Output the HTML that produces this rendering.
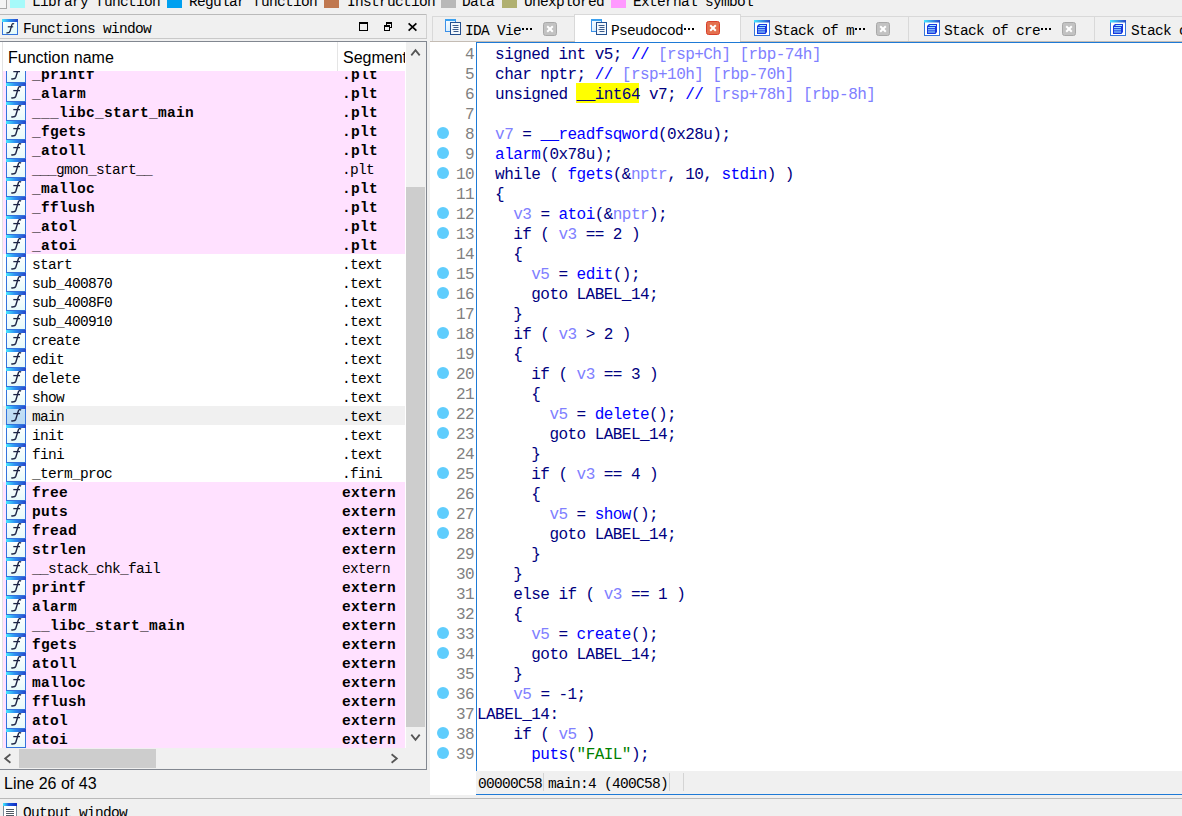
<!DOCTYPE html>
<html><head><meta charset="utf-8"><style>
*{margin:0;padding:0;box-sizing:border-box}
html,body{width:1182px;height:816px;overflow:hidden;background:#f0f0f0;position:relative;font-family:"Liberation Mono",monospace}
.a{position:absolute}
.sm{font-family:"Liberation Mono",monospace;font-size:14.5px;letter-spacing:-0.7px;white-space:pre;color:#000}
.bd{font-weight:bold;letter-spacing:0.3px}
.row{position:absolute;left:3px;width:402px;height:19px}
.row .ic{position:absolute;left:3px;top:0;width:20px;height:19px}
.row .nm{position:absolute;left:29px;top:2px;line-height:19px}
.row .sg{position:absolute;left:339px;top:2px;line-height:19px}
.code{position:absolute;left:477px;font-family:"Liberation Mono",monospace;font-size:16px;letter-spacing:-0.55px;white-space:pre;line-height:20px;height:20px;color:#000080}
.ln{position:absolute;left:440px;width:34px;text-align:right;font-family:"Liberation Mono",monospace;font-size:16px;letter-spacing:-0.55px;line-height:20px;height:20px;color:#808080}
.dot{position:absolute;left:437px;width:12px;height:12px;border-radius:50%;background:#5fcdfd}
.b{color:#0000ff}.v{color:#8080ff}.c{color:#8080ff}.g{color:#008000}.y{}
.tab{position:absolute;top:16px;height:26px;border:1px solid #d9d9d9;border-bottom:none;background:#f0f0f0}
.tt{position:absolute;top:0;line-height:26px;font-family:"Liberation Mono",monospace;font-size:13.33px;white-space:pre;color:#000}
.cx{position:absolute;width:14px;height:14px;border-radius:2px;background:#b4b4b4}
</style></head><body>

<div class="a" style="left:0;top:0;width:7px;height:9px;border:1px solid #a8a8a8;border-top:none;border-left:none;background:#f4f4f4"></div>
<div class="a" style="left:10px;top:0;width:15px;height:8px;background:#a6fafa"></div>
<div class="a sm" style="left:32px;top:-6px;line-height:16px">Library&#32;function</div>
<div class="a" style="left:167px;top:0;width:15px;height:8px;background:#00a0f0"></div>
<div class="a sm" style="left:189px;top:-6px;line-height:16px">Regular&#32;function</div>
<div class="a" style="left:324px;top:0;width:15px;height:8px;background:#c07850"></div>
<div class="a sm" style="left:347px;top:-6px;line-height:16px">Instruction</div>
<div class="a" style="left:441px;top:0;width:15px;height:8px;background:#b8b8b8"></div>
<div class="a sm" style="left:462px;top:-6px;line-height:16px">Data</div>
<div class="a" style="left:502px;top:0;width:15px;height:8px;background:#b0b070"></div>
<div class="a sm" style="left:524px;top:-6px;line-height:16px">Unexplored</div>
<div class="a" style="left:611px;top:0;width:15px;height:8px;background:#ff99ff"></div>
<div class="a sm" style="left:633px;top:-6px;line-height:16px">External&#32;symbol</div>
<div class="a" style="left:0;top:14px;width:427px;height:1px;background:#bababa"></div>
<div class="a" style="left:426px;top:14px;width:1px;height:25px;background:#d0d0d0"></div>
<div class="a" style="left:0;top:38px;width:427px;height:1px;background:#c9c9c9"></div>
<div class="a" style="left:2px;top:19px;width:16px;height:16px"><svg width="16" height="16" viewBox="0 0 16 16"><defs><linearGradient id="ttg" x1="0" x2="1"><stop offset="0" stop-color="#48e8ff"/><stop offset="0.45" stop-color="#2c8ef0"/><stop offset="1" stop-color="#2846c8"/></linearGradient><linearGradient id="ttb" x1="0" y1="0" x2="0" y2="1"><stop offset="0" stop-color="#ffffff"/><stop offset="1" stop-color="#e0fafa"/></linearGradient></defs><rect x="0.5" y="0.5" width="15" height="15" fill="url(#ttb)" stroke="#3474dc"/><rect x="0" y="0" width="16" height="3" fill="url(#ttg)"/><path d="M12 5.2C11.4 4.4 10.3 4.5 9.9 5.6L7.9 12.6C7.5 13.6 6.6 14 4.4 13.8" fill="none" stroke="#1c2444" stroke-width="1.3"/><path d="M5.8 7.8H11.2" stroke="#1c2444" stroke-width="1.2"/></svg></div>
<div class="a sm" style="left:23px;top:21px;line-height:16px">Functions window</div>
<div class="a" style="left:359px;top:22px;width:9px;height:9px;border:1px solid #000;border-top-width:2px"></div>
<div class="a" style="left:386px;top:22px;width:6px;height:6px;border:1px solid #000;border-top-width:2px"></div>
<div class="a" style="left:384px;top:25px;width:6px;height:6px;border:1px solid #000;border-top-width:2px;background:#f0f0f0"></div>
<svg class="a" style="left:407px;top:22px" width="11" height="10"><path d="M1.6 1.4L9.4 8.6M9.4 1.4L1.6 8.6" stroke="#000" stroke-width="1.7"/></svg>
<div class="a" style="left:0;top:41px;width:427px;height:729px;border:1px solid #828790;border-left:none;background:#fff"></div>
<div class="a" style="left:2px;top:42px;width:1px;height:706px;background:#e3e3e3"></div>
<div class="a" style="left:8px;top:49px;font-family:'Liberation Sans', sans-serif;font-size:16px;line-height:18px;color:#000">Function name</div>
<div class="a" style="left:337px;top:42px;width:1px;height:29px;background:#e5e5e5"></div>
<div class="a" style="left:343px;top:49px;width:62px;overflow:hidden;font-family:'Liberation Sans', sans-serif;font-size:16px;line-height:18px;color:#000;white-space:nowrap">Segment</div>
<div class="a" style="left:0;top:71px;width:406px;height:677px;overflow:hidden">
<div class="row" style="top:-7px;background:#ffe1ff"><div class="ic"><svg width="20" height="19" viewBox="0 0 20 19"><defs><linearGradient id="tg1" x1="0" x2="1"><stop offset="0" stop-color="#48e8ff"/><stop offset="0.45" stop-color="#2c8ef0"/><stop offset="1" stop-color="#2846c8"/></linearGradient><linearGradient id="tgb1" x1="0" y1="0" x2="0" y2="1"><stop offset="0" stop-color="#ffffff"/><stop offset="1" stop-color="#e6fafa"/></linearGradient></defs><rect x="0.5" y="0.5" width="19" height="18" fill="url(#tgb1)" stroke="#3474dc"/><rect x="0" y="0" width="20" height="3" fill="url(#tg1)"/><path d="M15 4.2C14.2 3.3 12.9 3.4 12.4 4.8L9.8 13.2C9.3 14.6 8 15.1 5.2 14.9" fill="none" stroke="#1c2444" stroke-width="1.4"/><path d="M7.3 7.6H14" stroke="#1c2444" stroke-width="1.3"/></svg></div><div class="nm sm bd">_printf</div><div class="sg sm bd">.plt</div></div>
<div class="row" style="top:12px;background:#ffe1ff"><div class="ic"><svg width="20" height="19" viewBox="0 0 20 19"><defs><linearGradient id="tg2" x1="0" x2="1"><stop offset="0" stop-color="#48e8ff"/><stop offset="0.45" stop-color="#2c8ef0"/><stop offset="1" stop-color="#2846c8"/></linearGradient><linearGradient id="tgb2" x1="0" y1="0" x2="0" y2="1"><stop offset="0" stop-color="#ffffff"/><stop offset="1" stop-color="#e6fafa"/></linearGradient></defs><rect x="0.5" y="0.5" width="19" height="18" fill="url(#tgb2)" stroke="#3474dc"/><rect x="0" y="0" width="20" height="3" fill="url(#tg2)"/><path d="M15 4.2C14.2 3.3 12.9 3.4 12.4 4.8L9.8 13.2C9.3 14.6 8 15.1 5.2 14.9" fill="none" stroke="#1c2444" stroke-width="1.4"/><path d="M7.3 7.6H14" stroke="#1c2444" stroke-width="1.3"/></svg></div><div class="nm sm bd">_alarm</div><div class="sg sm bd">.plt</div></div>
<div class="row" style="top:31px;background:#ffe1ff"><div class="ic"><svg width="20" height="19" viewBox="0 0 20 19"><defs><linearGradient id="tg3" x1="0" x2="1"><stop offset="0" stop-color="#48e8ff"/><stop offset="0.45" stop-color="#2c8ef0"/><stop offset="1" stop-color="#2846c8"/></linearGradient><linearGradient id="tgb3" x1="0" y1="0" x2="0" y2="1"><stop offset="0" stop-color="#ffffff"/><stop offset="1" stop-color="#e6fafa"/></linearGradient></defs><rect x="0.5" y="0.5" width="19" height="18" fill="url(#tgb3)" stroke="#3474dc"/><rect x="0" y="0" width="20" height="3" fill="url(#tg3)"/><path d="M15 4.2C14.2 3.3 12.9 3.4 12.4 4.8L9.8 13.2C9.3 14.6 8 15.1 5.2 14.9" fill="none" stroke="#1c2444" stroke-width="1.4"/><path d="M7.3 7.6H14" stroke="#1c2444" stroke-width="1.3"/></svg></div><div class="nm sm bd">___libc_start_main</div><div class="sg sm bd">.plt</div></div>
<div class="row" style="top:50px;background:#ffe1ff"><div class="ic"><svg width="20" height="19" viewBox="0 0 20 19"><defs><linearGradient id="tg4" x1="0" x2="1"><stop offset="0" stop-color="#48e8ff"/><stop offset="0.45" stop-color="#2c8ef0"/><stop offset="1" stop-color="#2846c8"/></linearGradient><linearGradient id="tgb4" x1="0" y1="0" x2="0" y2="1"><stop offset="0" stop-color="#ffffff"/><stop offset="1" stop-color="#e6fafa"/></linearGradient></defs><rect x="0.5" y="0.5" width="19" height="18" fill="url(#tgb4)" stroke="#3474dc"/><rect x="0" y="0" width="20" height="3" fill="url(#tg4)"/><path d="M15 4.2C14.2 3.3 12.9 3.4 12.4 4.8L9.8 13.2C9.3 14.6 8 15.1 5.2 14.9" fill="none" stroke="#1c2444" stroke-width="1.4"/><path d="M7.3 7.6H14" stroke="#1c2444" stroke-width="1.3"/></svg></div><div class="nm sm bd">_fgets</div><div class="sg sm bd">.plt</div></div>
<div class="row" style="top:69px;background:#ffe1ff"><div class="ic"><svg width="20" height="19" viewBox="0 0 20 19"><defs><linearGradient id="tg5" x1="0" x2="1"><stop offset="0" stop-color="#48e8ff"/><stop offset="0.45" stop-color="#2c8ef0"/><stop offset="1" stop-color="#2846c8"/></linearGradient><linearGradient id="tgb5" x1="0" y1="0" x2="0" y2="1"><stop offset="0" stop-color="#ffffff"/><stop offset="1" stop-color="#e6fafa"/></linearGradient></defs><rect x="0.5" y="0.5" width="19" height="18" fill="url(#tgb5)" stroke="#3474dc"/><rect x="0" y="0" width="20" height="3" fill="url(#tg5)"/><path d="M15 4.2C14.2 3.3 12.9 3.4 12.4 4.8L9.8 13.2C9.3 14.6 8 15.1 5.2 14.9" fill="none" stroke="#1c2444" stroke-width="1.4"/><path d="M7.3 7.6H14" stroke="#1c2444" stroke-width="1.3"/></svg></div><div class="nm sm bd">_atoll</div><div class="sg sm bd">.plt</div></div>
<div class="row" style="top:88px;background:#ffe1ff"><div class="ic"><svg width="20" height="19" viewBox="0 0 20 19"><defs><linearGradient id="tg6" x1="0" x2="1"><stop offset="0" stop-color="#48e8ff"/><stop offset="0.45" stop-color="#2c8ef0"/><stop offset="1" stop-color="#2846c8"/></linearGradient><linearGradient id="tgb6" x1="0" y1="0" x2="0" y2="1"><stop offset="0" stop-color="#ffffff"/><stop offset="1" stop-color="#e6fafa"/></linearGradient></defs><rect x="0.5" y="0.5" width="19" height="18" fill="url(#tgb6)" stroke="#3474dc"/><rect x="0" y="0" width="20" height="3" fill="url(#tg6)"/><path d="M15 4.2C14.2 3.3 12.9 3.4 12.4 4.8L9.8 13.2C9.3 14.6 8 15.1 5.2 14.9" fill="none" stroke="#1c2444" stroke-width="1.4"/><path d="M7.3 7.6H14" stroke="#1c2444" stroke-width="1.3"/></svg></div><div class="nm sm">___gmon_start__</div><div class="sg sm">.plt</div></div>
<div class="row" style="top:107px;background:#ffe1ff"><div class="ic"><svg width="20" height="19" viewBox="0 0 20 19"><defs><linearGradient id="tg7" x1="0" x2="1"><stop offset="0" stop-color="#48e8ff"/><stop offset="0.45" stop-color="#2c8ef0"/><stop offset="1" stop-color="#2846c8"/></linearGradient><linearGradient id="tgb7" x1="0" y1="0" x2="0" y2="1"><stop offset="0" stop-color="#ffffff"/><stop offset="1" stop-color="#e6fafa"/></linearGradient></defs><rect x="0.5" y="0.5" width="19" height="18" fill="url(#tgb7)" stroke="#3474dc"/><rect x="0" y="0" width="20" height="3" fill="url(#tg7)"/><path d="M15 4.2C14.2 3.3 12.9 3.4 12.4 4.8L9.8 13.2C9.3 14.6 8 15.1 5.2 14.9" fill="none" stroke="#1c2444" stroke-width="1.4"/><path d="M7.3 7.6H14" stroke="#1c2444" stroke-width="1.3"/></svg></div><div class="nm sm bd">_malloc</div><div class="sg sm bd">.plt</div></div>
<div class="row" style="top:126px;background:#ffe1ff"><div class="ic"><svg width="20" height="19" viewBox="0 0 20 19"><defs><linearGradient id="tg8" x1="0" x2="1"><stop offset="0" stop-color="#48e8ff"/><stop offset="0.45" stop-color="#2c8ef0"/><stop offset="1" stop-color="#2846c8"/></linearGradient><linearGradient id="tgb8" x1="0" y1="0" x2="0" y2="1"><stop offset="0" stop-color="#ffffff"/><stop offset="1" stop-color="#e6fafa"/></linearGradient></defs><rect x="0.5" y="0.5" width="19" height="18" fill="url(#tgb8)" stroke="#3474dc"/><rect x="0" y="0" width="20" height="3" fill="url(#tg8)"/><path d="M15 4.2C14.2 3.3 12.9 3.4 12.4 4.8L9.8 13.2C9.3 14.6 8 15.1 5.2 14.9" fill="none" stroke="#1c2444" stroke-width="1.4"/><path d="M7.3 7.6H14" stroke="#1c2444" stroke-width="1.3"/></svg></div><div class="nm sm bd">_fflush</div><div class="sg sm bd">.plt</div></div>
<div class="row" style="top:145px;background:#ffe1ff"><div class="ic"><svg width="20" height="19" viewBox="0 0 20 19"><defs><linearGradient id="tg9" x1="0" x2="1"><stop offset="0" stop-color="#48e8ff"/><stop offset="0.45" stop-color="#2c8ef0"/><stop offset="1" stop-color="#2846c8"/></linearGradient><linearGradient id="tgb9" x1="0" y1="0" x2="0" y2="1"><stop offset="0" stop-color="#ffffff"/><stop offset="1" stop-color="#e6fafa"/></linearGradient></defs><rect x="0.5" y="0.5" width="19" height="18" fill="url(#tgb9)" stroke="#3474dc"/><rect x="0" y="0" width="20" height="3" fill="url(#tg9)"/><path d="M15 4.2C14.2 3.3 12.9 3.4 12.4 4.8L9.8 13.2C9.3 14.6 8 15.1 5.2 14.9" fill="none" stroke="#1c2444" stroke-width="1.4"/><path d="M7.3 7.6H14" stroke="#1c2444" stroke-width="1.3"/></svg></div><div class="nm sm bd">_atol</div><div class="sg sm bd">.plt</div></div>
<div class="row" style="top:164px;background:#ffe1ff"><div class="ic"><svg width="20" height="19" viewBox="0 0 20 19"><defs><linearGradient id="tg10" x1="0" x2="1"><stop offset="0" stop-color="#48e8ff"/><stop offset="0.45" stop-color="#2c8ef0"/><stop offset="1" stop-color="#2846c8"/></linearGradient><linearGradient id="tgb10" x1="0" y1="0" x2="0" y2="1"><stop offset="0" stop-color="#ffffff"/><stop offset="1" stop-color="#e6fafa"/></linearGradient></defs><rect x="0.5" y="0.5" width="19" height="18" fill="url(#tgb10)" stroke="#3474dc"/><rect x="0" y="0" width="20" height="3" fill="url(#tg10)"/><path d="M15 4.2C14.2 3.3 12.9 3.4 12.4 4.8L9.8 13.2C9.3 14.6 8 15.1 5.2 14.9" fill="none" stroke="#1c2444" stroke-width="1.4"/><path d="M7.3 7.6H14" stroke="#1c2444" stroke-width="1.3"/></svg></div><div class="nm sm bd">_atoi</div><div class="sg sm bd">.plt</div></div>
<div class="row" style="top:183px;background:#ffffff"><div class="ic"><svg width="20" height="19" viewBox="0 0 20 19"><defs><linearGradient id="tg11" x1="0" x2="1"><stop offset="0" stop-color="#48e8ff"/><stop offset="0.45" stop-color="#2c8ef0"/><stop offset="1" stop-color="#2846c8"/></linearGradient><linearGradient id="tgb11" x1="0" y1="0" x2="0" y2="1"><stop offset="0" stop-color="#ffffff"/><stop offset="1" stop-color="#e6fafa"/></linearGradient></defs><rect x="0.5" y="0.5" width="19" height="18" fill="url(#tgb11)" stroke="#3474dc"/><rect x="0" y="0" width="20" height="3" fill="url(#tg11)"/><path d="M15 4.2C14.2 3.3 12.9 3.4 12.4 4.8L9.8 13.2C9.3 14.6 8 15.1 5.2 14.9" fill="none" stroke="#1c2444" stroke-width="1.4"/><path d="M7.3 7.6H14" stroke="#1c2444" stroke-width="1.3"/></svg></div><div class="nm sm">start</div><div class="sg sm">.text</div></div>
<div class="row" style="top:202px;background:#ffffff"><div class="ic"><svg width="20" height="19" viewBox="0 0 20 19"><defs><linearGradient id="tg12" x1="0" x2="1"><stop offset="0" stop-color="#48e8ff"/><stop offset="0.45" stop-color="#2c8ef0"/><stop offset="1" stop-color="#2846c8"/></linearGradient><linearGradient id="tgb12" x1="0" y1="0" x2="0" y2="1"><stop offset="0" stop-color="#ffffff"/><stop offset="1" stop-color="#e6fafa"/></linearGradient></defs><rect x="0.5" y="0.5" width="19" height="18" fill="url(#tgb12)" stroke="#3474dc"/><rect x="0" y="0" width="20" height="3" fill="url(#tg12)"/><path d="M15 4.2C14.2 3.3 12.9 3.4 12.4 4.8L9.8 13.2C9.3 14.6 8 15.1 5.2 14.9" fill="none" stroke="#1c2444" stroke-width="1.4"/><path d="M7.3 7.6H14" stroke="#1c2444" stroke-width="1.3"/></svg></div><div class="nm sm">sub_400870</div><div class="sg sm">.text</div></div>
<div class="row" style="top:221px;background:#ffffff"><div class="ic"><svg width="20" height="19" viewBox="0 0 20 19"><defs><linearGradient id="tg13" x1="0" x2="1"><stop offset="0" stop-color="#48e8ff"/><stop offset="0.45" stop-color="#2c8ef0"/><stop offset="1" stop-color="#2846c8"/></linearGradient><linearGradient id="tgb13" x1="0" y1="0" x2="0" y2="1"><stop offset="0" stop-color="#ffffff"/><stop offset="1" stop-color="#e6fafa"/></linearGradient></defs><rect x="0.5" y="0.5" width="19" height="18" fill="url(#tgb13)" stroke="#3474dc"/><rect x="0" y="0" width="20" height="3" fill="url(#tg13)"/><path d="M15 4.2C14.2 3.3 12.9 3.4 12.4 4.8L9.8 13.2C9.3 14.6 8 15.1 5.2 14.9" fill="none" stroke="#1c2444" stroke-width="1.4"/><path d="M7.3 7.6H14" stroke="#1c2444" stroke-width="1.3"/></svg></div><div class="nm sm">sub_4008F0</div><div class="sg sm">.text</div></div>
<div class="row" style="top:240px;background:#ffffff"><div class="ic"><svg width="20" height="19" viewBox="0 0 20 19"><defs><linearGradient id="tg14" x1="0" x2="1"><stop offset="0" stop-color="#48e8ff"/><stop offset="0.45" stop-color="#2c8ef0"/><stop offset="1" stop-color="#2846c8"/></linearGradient><linearGradient id="tgb14" x1="0" y1="0" x2="0" y2="1"><stop offset="0" stop-color="#ffffff"/><stop offset="1" stop-color="#e6fafa"/></linearGradient></defs><rect x="0.5" y="0.5" width="19" height="18" fill="url(#tgb14)" stroke="#3474dc"/><rect x="0" y="0" width="20" height="3" fill="url(#tg14)"/><path d="M15 4.2C14.2 3.3 12.9 3.4 12.4 4.8L9.8 13.2C9.3 14.6 8 15.1 5.2 14.9" fill="none" stroke="#1c2444" stroke-width="1.4"/><path d="M7.3 7.6H14" stroke="#1c2444" stroke-width="1.3"/></svg></div><div class="nm sm">sub_400910</div><div class="sg sm">.text</div></div>
<div class="row" style="top:259px;background:#ffffff"><div class="ic"><svg width="20" height="19" viewBox="0 0 20 19"><defs><linearGradient id="tg15" x1="0" x2="1"><stop offset="0" stop-color="#48e8ff"/><stop offset="0.45" stop-color="#2c8ef0"/><stop offset="1" stop-color="#2846c8"/></linearGradient><linearGradient id="tgb15" x1="0" y1="0" x2="0" y2="1"><stop offset="0" stop-color="#ffffff"/><stop offset="1" stop-color="#e6fafa"/></linearGradient></defs><rect x="0.5" y="0.5" width="19" height="18" fill="url(#tgb15)" stroke="#3474dc"/><rect x="0" y="0" width="20" height="3" fill="url(#tg15)"/><path d="M15 4.2C14.2 3.3 12.9 3.4 12.4 4.8L9.8 13.2C9.3 14.6 8 15.1 5.2 14.9" fill="none" stroke="#1c2444" stroke-width="1.4"/><path d="M7.3 7.6H14" stroke="#1c2444" stroke-width="1.3"/></svg></div><div class="nm sm">create</div><div class="sg sm">.text</div></div>
<div class="row" style="top:278px;background:#ffffff"><div class="ic"><svg width="20" height="19" viewBox="0 0 20 19"><defs><linearGradient id="tg16" x1="0" x2="1"><stop offset="0" stop-color="#48e8ff"/><stop offset="0.45" stop-color="#2c8ef0"/><stop offset="1" stop-color="#2846c8"/></linearGradient><linearGradient id="tgb16" x1="0" y1="0" x2="0" y2="1"><stop offset="0" stop-color="#ffffff"/><stop offset="1" stop-color="#e6fafa"/></linearGradient></defs><rect x="0.5" y="0.5" width="19" height="18" fill="url(#tgb16)" stroke="#3474dc"/><rect x="0" y="0" width="20" height="3" fill="url(#tg16)"/><path d="M15 4.2C14.2 3.3 12.9 3.4 12.4 4.8L9.8 13.2C9.3 14.6 8 15.1 5.2 14.9" fill="none" stroke="#1c2444" stroke-width="1.4"/><path d="M7.3 7.6H14" stroke="#1c2444" stroke-width="1.3"/></svg></div><div class="nm sm">edit</div><div class="sg sm">.text</div></div>
<div class="row" style="top:297px;background:#ffffff"><div class="ic"><svg width="20" height="19" viewBox="0 0 20 19"><defs><linearGradient id="tg17" x1="0" x2="1"><stop offset="0" stop-color="#48e8ff"/><stop offset="0.45" stop-color="#2c8ef0"/><stop offset="1" stop-color="#2846c8"/></linearGradient><linearGradient id="tgb17" x1="0" y1="0" x2="0" y2="1"><stop offset="0" stop-color="#ffffff"/><stop offset="1" stop-color="#e6fafa"/></linearGradient></defs><rect x="0.5" y="0.5" width="19" height="18" fill="url(#tgb17)" stroke="#3474dc"/><rect x="0" y="0" width="20" height="3" fill="url(#tg17)"/><path d="M15 4.2C14.2 3.3 12.9 3.4 12.4 4.8L9.8 13.2C9.3 14.6 8 15.1 5.2 14.9" fill="none" stroke="#1c2444" stroke-width="1.4"/><path d="M7.3 7.6H14" stroke="#1c2444" stroke-width="1.3"/></svg></div><div class="nm sm">delete</div><div class="sg sm">.text</div></div>
<div class="row" style="top:316px;background:#ffffff"><div class="ic"><svg width="20" height="19" viewBox="0 0 20 19"><defs><linearGradient id="tg18" x1="0" x2="1"><stop offset="0" stop-color="#48e8ff"/><stop offset="0.45" stop-color="#2c8ef0"/><stop offset="1" stop-color="#2846c8"/></linearGradient><linearGradient id="tgb18" x1="0" y1="0" x2="0" y2="1"><stop offset="0" stop-color="#ffffff"/><stop offset="1" stop-color="#e6fafa"/></linearGradient></defs><rect x="0.5" y="0.5" width="19" height="18" fill="url(#tgb18)" stroke="#3474dc"/><rect x="0" y="0" width="20" height="3" fill="url(#tg18)"/><path d="M15 4.2C14.2 3.3 12.9 3.4 12.4 4.8L9.8 13.2C9.3 14.6 8 15.1 5.2 14.9" fill="none" stroke="#1c2444" stroke-width="1.4"/><path d="M7.3 7.6H14" stroke="#1c2444" stroke-width="1.3"/></svg></div><div class="nm sm">show</div><div class="sg sm">.text</div></div>
<div class="row" style="top:335px;background:#f0f0f0"><div class="ic"><svg width="20" height="19" viewBox="0 0 20 19"><defs><linearGradient id="tg19" x1="0" x2="1"><stop offset="0" stop-color="#48e8ff"/><stop offset="0.45" stop-color="#2c8ef0"/><stop offset="1" stop-color="#2846c8"/></linearGradient><linearGradient id="tgb19" x1="0" y1="0" x2="0" y2="1"><stop offset="0" stop-color="#c4e0f6"/><stop offset="1" stop-color="#b9daf3"/></linearGradient></defs><rect x="0.5" y="0.5" width="19" height="18" fill="url(#tgb19)" stroke="#3474dc"/><rect x="0" y="0" width="20" height="3" fill="url(#tg19)"/><path d="M15 4.2C14.2 3.3 12.9 3.4 12.4 4.8L9.8 13.2C9.3 14.6 8 15.1 5.2 14.9" fill="none" stroke="#1c2444" stroke-width="1.4"/><path d="M7.3 7.6H14" stroke="#1c2444" stroke-width="1.3"/></svg></div><div class="nm sm">main</div><div class="sg sm">.text</div></div>
<div class="row" style="top:354px;background:#ffffff"><div class="ic"><svg width="20" height="19" viewBox="0 0 20 19"><defs><linearGradient id="tg20" x1="0" x2="1"><stop offset="0" stop-color="#48e8ff"/><stop offset="0.45" stop-color="#2c8ef0"/><stop offset="1" stop-color="#2846c8"/></linearGradient><linearGradient id="tgb20" x1="0" y1="0" x2="0" y2="1"><stop offset="0" stop-color="#ffffff"/><stop offset="1" stop-color="#e6fafa"/></linearGradient></defs><rect x="0.5" y="0.5" width="19" height="18" fill="url(#tgb20)" stroke="#3474dc"/><rect x="0" y="0" width="20" height="3" fill="url(#tg20)"/><path d="M15 4.2C14.2 3.3 12.9 3.4 12.4 4.8L9.8 13.2C9.3 14.6 8 15.1 5.2 14.9" fill="none" stroke="#1c2444" stroke-width="1.4"/><path d="M7.3 7.6H14" stroke="#1c2444" stroke-width="1.3"/></svg></div><div class="nm sm">init</div><div class="sg sm">.text</div></div>
<div class="row" style="top:373px;background:#ffffff"><div class="ic"><svg width="20" height="19" viewBox="0 0 20 19"><defs><linearGradient id="tg21" x1="0" x2="1"><stop offset="0" stop-color="#48e8ff"/><stop offset="0.45" stop-color="#2c8ef0"/><stop offset="1" stop-color="#2846c8"/></linearGradient><linearGradient id="tgb21" x1="0" y1="0" x2="0" y2="1"><stop offset="0" stop-color="#ffffff"/><stop offset="1" stop-color="#e6fafa"/></linearGradient></defs><rect x="0.5" y="0.5" width="19" height="18" fill="url(#tgb21)" stroke="#3474dc"/><rect x="0" y="0" width="20" height="3" fill="url(#tg21)"/><path d="M15 4.2C14.2 3.3 12.9 3.4 12.4 4.8L9.8 13.2C9.3 14.6 8 15.1 5.2 14.9" fill="none" stroke="#1c2444" stroke-width="1.4"/><path d="M7.3 7.6H14" stroke="#1c2444" stroke-width="1.3"/></svg></div><div class="nm sm">fini</div><div class="sg sm">.text</div></div>
<div class="row" style="top:392px;background:#ffffff"><div class="ic"><svg width="20" height="19" viewBox="0 0 20 19"><defs><linearGradient id="tg22" x1="0" x2="1"><stop offset="0" stop-color="#48e8ff"/><stop offset="0.45" stop-color="#2c8ef0"/><stop offset="1" stop-color="#2846c8"/></linearGradient><linearGradient id="tgb22" x1="0" y1="0" x2="0" y2="1"><stop offset="0" stop-color="#ffffff"/><stop offset="1" stop-color="#e6fafa"/></linearGradient></defs><rect x="0.5" y="0.5" width="19" height="18" fill="url(#tgb22)" stroke="#3474dc"/><rect x="0" y="0" width="20" height="3" fill="url(#tg22)"/><path d="M15 4.2C14.2 3.3 12.9 3.4 12.4 4.8L9.8 13.2C9.3 14.6 8 15.1 5.2 14.9" fill="none" stroke="#1c2444" stroke-width="1.4"/><path d="M7.3 7.6H14" stroke="#1c2444" stroke-width="1.3"/></svg></div><div class="nm sm">_term_proc</div><div class="sg sm">.fini</div></div>
<div class="row" style="top:411px;background:#ffe1ff"><div class="ic"><svg width="20" height="19" viewBox="0 0 20 19"><defs><linearGradient id="tg23" x1="0" x2="1"><stop offset="0" stop-color="#48e8ff"/><stop offset="0.45" stop-color="#2c8ef0"/><stop offset="1" stop-color="#2846c8"/></linearGradient><linearGradient id="tgb23" x1="0" y1="0" x2="0" y2="1"><stop offset="0" stop-color="#ffffff"/><stop offset="1" stop-color="#e6fafa"/></linearGradient></defs><rect x="0.5" y="0.5" width="19" height="18" fill="url(#tgb23)" stroke="#3474dc"/><rect x="0" y="0" width="20" height="3" fill="url(#tg23)"/><path d="M15 4.2C14.2 3.3 12.9 3.4 12.4 4.8L9.8 13.2C9.3 14.6 8 15.1 5.2 14.9" fill="none" stroke="#1c2444" stroke-width="1.4"/><path d="M7.3 7.6H14" stroke="#1c2444" stroke-width="1.3"/></svg></div><div class="nm sm bd">free</div><div class="sg sm bd">extern</div></div>
<div class="row" style="top:430px;background:#ffe1ff"><div class="ic"><svg width="20" height="19" viewBox="0 0 20 19"><defs><linearGradient id="tg24" x1="0" x2="1"><stop offset="0" stop-color="#48e8ff"/><stop offset="0.45" stop-color="#2c8ef0"/><stop offset="1" stop-color="#2846c8"/></linearGradient><linearGradient id="tgb24" x1="0" y1="0" x2="0" y2="1"><stop offset="0" stop-color="#ffffff"/><stop offset="1" stop-color="#e6fafa"/></linearGradient></defs><rect x="0.5" y="0.5" width="19" height="18" fill="url(#tgb24)" stroke="#3474dc"/><rect x="0" y="0" width="20" height="3" fill="url(#tg24)"/><path d="M15 4.2C14.2 3.3 12.9 3.4 12.4 4.8L9.8 13.2C9.3 14.6 8 15.1 5.2 14.9" fill="none" stroke="#1c2444" stroke-width="1.4"/><path d="M7.3 7.6H14" stroke="#1c2444" stroke-width="1.3"/></svg></div><div class="nm sm bd">puts</div><div class="sg sm bd">extern</div></div>
<div class="row" style="top:449px;background:#ffe1ff"><div class="ic"><svg width="20" height="19" viewBox="0 0 20 19"><defs><linearGradient id="tg25" x1="0" x2="1"><stop offset="0" stop-color="#48e8ff"/><stop offset="0.45" stop-color="#2c8ef0"/><stop offset="1" stop-color="#2846c8"/></linearGradient><linearGradient id="tgb25" x1="0" y1="0" x2="0" y2="1"><stop offset="0" stop-color="#ffffff"/><stop offset="1" stop-color="#e6fafa"/></linearGradient></defs><rect x="0.5" y="0.5" width="19" height="18" fill="url(#tgb25)" stroke="#3474dc"/><rect x="0" y="0" width="20" height="3" fill="url(#tg25)"/><path d="M15 4.2C14.2 3.3 12.9 3.4 12.4 4.8L9.8 13.2C9.3 14.6 8 15.1 5.2 14.9" fill="none" stroke="#1c2444" stroke-width="1.4"/><path d="M7.3 7.6H14" stroke="#1c2444" stroke-width="1.3"/></svg></div><div class="nm sm bd">fread</div><div class="sg sm bd">extern</div></div>
<div class="row" style="top:468px;background:#ffe1ff"><div class="ic"><svg width="20" height="19" viewBox="0 0 20 19"><defs><linearGradient id="tg26" x1="0" x2="1"><stop offset="0" stop-color="#48e8ff"/><stop offset="0.45" stop-color="#2c8ef0"/><stop offset="1" stop-color="#2846c8"/></linearGradient><linearGradient id="tgb26" x1="0" y1="0" x2="0" y2="1"><stop offset="0" stop-color="#ffffff"/><stop offset="1" stop-color="#e6fafa"/></linearGradient></defs><rect x="0.5" y="0.5" width="19" height="18" fill="url(#tgb26)" stroke="#3474dc"/><rect x="0" y="0" width="20" height="3" fill="url(#tg26)"/><path d="M15 4.2C14.2 3.3 12.9 3.4 12.4 4.8L9.8 13.2C9.3 14.6 8 15.1 5.2 14.9" fill="none" stroke="#1c2444" stroke-width="1.4"/><path d="M7.3 7.6H14" stroke="#1c2444" stroke-width="1.3"/></svg></div><div class="nm sm bd">strlen</div><div class="sg sm bd">extern</div></div>
<div class="row" style="top:487px;background:#ffe1ff"><div class="ic"><svg width="20" height="19" viewBox="0 0 20 19"><defs><linearGradient id="tg27" x1="0" x2="1"><stop offset="0" stop-color="#48e8ff"/><stop offset="0.45" stop-color="#2c8ef0"/><stop offset="1" stop-color="#2846c8"/></linearGradient><linearGradient id="tgb27" x1="0" y1="0" x2="0" y2="1"><stop offset="0" stop-color="#ffffff"/><stop offset="1" stop-color="#e6fafa"/></linearGradient></defs><rect x="0.5" y="0.5" width="19" height="18" fill="url(#tgb27)" stroke="#3474dc"/><rect x="0" y="0" width="20" height="3" fill="url(#tg27)"/><path d="M15 4.2C14.2 3.3 12.9 3.4 12.4 4.8L9.8 13.2C9.3 14.6 8 15.1 5.2 14.9" fill="none" stroke="#1c2444" stroke-width="1.4"/><path d="M7.3 7.6H14" stroke="#1c2444" stroke-width="1.3"/></svg></div><div class="nm sm">__stack_chk_fail</div><div class="sg sm">extern</div></div>
<div class="row" style="top:506px;background:#ffe1ff"><div class="ic"><svg width="20" height="19" viewBox="0 0 20 19"><defs><linearGradient id="tg28" x1="0" x2="1"><stop offset="0" stop-color="#48e8ff"/><stop offset="0.45" stop-color="#2c8ef0"/><stop offset="1" stop-color="#2846c8"/></linearGradient><linearGradient id="tgb28" x1="0" y1="0" x2="0" y2="1"><stop offset="0" stop-color="#ffffff"/><stop offset="1" stop-color="#e6fafa"/></linearGradient></defs><rect x="0.5" y="0.5" width="19" height="18" fill="url(#tgb28)" stroke="#3474dc"/><rect x="0" y="0" width="20" height="3" fill="url(#tg28)"/><path d="M15 4.2C14.2 3.3 12.9 3.4 12.4 4.8L9.8 13.2C9.3 14.6 8 15.1 5.2 14.9" fill="none" stroke="#1c2444" stroke-width="1.4"/><path d="M7.3 7.6H14" stroke="#1c2444" stroke-width="1.3"/></svg></div><div class="nm sm bd">printf</div><div class="sg sm bd">extern</div></div>
<div class="row" style="top:525px;background:#ffe1ff"><div class="ic"><svg width="20" height="19" viewBox="0 0 20 19"><defs><linearGradient id="tg29" x1="0" x2="1"><stop offset="0" stop-color="#48e8ff"/><stop offset="0.45" stop-color="#2c8ef0"/><stop offset="1" stop-color="#2846c8"/></linearGradient><linearGradient id="tgb29" x1="0" y1="0" x2="0" y2="1"><stop offset="0" stop-color="#ffffff"/><stop offset="1" stop-color="#e6fafa"/></linearGradient></defs><rect x="0.5" y="0.5" width="19" height="18" fill="url(#tgb29)" stroke="#3474dc"/><rect x="0" y="0" width="20" height="3" fill="url(#tg29)"/><path d="M15 4.2C14.2 3.3 12.9 3.4 12.4 4.8L9.8 13.2C9.3 14.6 8 15.1 5.2 14.9" fill="none" stroke="#1c2444" stroke-width="1.4"/><path d="M7.3 7.6H14" stroke="#1c2444" stroke-width="1.3"/></svg></div><div class="nm sm bd">alarm</div><div class="sg sm bd">extern</div></div>
<div class="row" style="top:544px;background:#ffe1ff"><div class="ic"><svg width="20" height="19" viewBox="0 0 20 19"><defs><linearGradient id="tg30" x1="0" x2="1"><stop offset="0" stop-color="#48e8ff"/><stop offset="0.45" stop-color="#2c8ef0"/><stop offset="1" stop-color="#2846c8"/></linearGradient><linearGradient id="tgb30" x1="0" y1="0" x2="0" y2="1"><stop offset="0" stop-color="#ffffff"/><stop offset="1" stop-color="#e6fafa"/></linearGradient></defs><rect x="0.5" y="0.5" width="19" height="18" fill="url(#tgb30)" stroke="#3474dc"/><rect x="0" y="0" width="20" height="3" fill="url(#tg30)"/><path d="M15 4.2C14.2 3.3 12.9 3.4 12.4 4.8L9.8 13.2C9.3 14.6 8 15.1 5.2 14.9" fill="none" stroke="#1c2444" stroke-width="1.4"/><path d="M7.3 7.6H14" stroke="#1c2444" stroke-width="1.3"/></svg></div><div class="nm sm bd">__libc_start_main</div><div class="sg sm bd">extern</div></div>
<div class="row" style="top:563px;background:#ffe1ff"><div class="ic"><svg width="20" height="19" viewBox="0 0 20 19"><defs><linearGradient id="tg31" x1="0" x2="1"><stop offset="0" stop-color="#48e8ff"/><stop offset="0.45" stop-color="#2c8ef0"/><stop offset="1" stop-color="#2846c8"/></linearGradient><linearGradient id="tgb31" x1="0" y1="0" x2="0" y2="1"><stop offset="0" stop-color="#ffffff"/><stop offset="1" stop-color="#e6fafa"/></linearGradient></defs><rect x="0.5" y="0.5" width="19" height="18" fill="url(#tgb31)" stroke="#3474dc"/><rect x="0" y="0" width="20" height="3" fill="url(#tg31)"/><path d="M15 4.2C14.2 3.3 12.9 3.4 12.4 4.8L9.8 13.2C9.3 14.6 8 15.1 5.2 14.9" fill="none" stroke="#1c2444" stroke-width="1.4"/><path d="M7.3 7.6H14" stroke="#1c2444" stroke-width="1.3"/></svg></div><div class="nm sm bd">fgets</div><div class="sg sm bd">extern</div></div>
<div class="row" style="top:582px;background:#ffe1ff"><div class="ic"><svg width="20" height="19" viewBox="0 0 20 19"><defs><linearGradient id="tg32" x1="0" x2="1"><stop offset="0" stop-color="#48e8ff"/><stop offset="0.45" stop-color="#2c8ef0"/><stop offset="1" stop-color="#2846c8"/></linearGradient><linearGradient id="tgb32" x1="0" y1="0" x2="0" y2="1"><stop offset="0" stop-color="#ffffff"/><stop offset="1" stop-color="#e6fafa"/></linearGradient></defs><rect x="0.5" y="0.5" width="19" height="18" fill="url(#tgb32)" stroke="#3474dc"/><rect x="0" y="0" width="20" height="3" fill="url(#tg32)"/><path d="M15 4.2C14.2 3.3 12.9 3.4 12.4 4.8L9.8 13.2C9.3 14.6 8 15.1 5.2 14.9" fill="none" stroke="#1c2444" stroke-width="1.4"/><path d="M7.3 7.6H14" stroke="#1c2444" stroke-width="1.3"/></svg></div><div class="nm sm bd">atoll</div><div class="sg sm bd">extern</div></div>
<div class="row" style="top:601px;background:#ffe1ff"><div class="ic"><svg width="20" height="19" viewBox="0 0 20 19"><defs><linearGradient id="tg33" x1="0" x2="1"><stop offset="0" stop-color="#48e8ff"/><stop offset="0.45" stop-color="#2c8ef0"/><stop offset="1" stop-color="#2846c8"/></linearGradient><linearGradient id="tgb33" x1="0" y1="0" x2="0" y2="1"><stop offset="0" stop-color="#ffffff"/><stop offset="1" stop-color="#e6fafa"/></linearGradient></defs><rect x="0.5" y="0.5" width="19" height="18" fill="url(#tgb33)" stroke="#3474dc"/><rect x="0" y="0" width="20" height="3" fill="url(#tg33)"/><path d="M15 4.2C14.2 3.3 12.9 3.4 12.4 4.8L9.8 13.2C9.3 14.6 8 15.1 5.2 14.9" fill="none" stroke="#1c2444" stroke-width="1.4"/><path d="M7.3 7.6H14" stroke="#1c2444" stroke-width="1.3"/></svg></div><div class="nm sm bd">malloc</div><div class="sg sm bd">extern</div></div>
<div class="row" style="top:620px;background:#ffe1ff"><div class="ic"><svg width="20" height="19" viewBox="0 0 20 19"><defs><linearGradient id="tg34" x1="0" x2="1"><stop offset="0" stop-color="#48e8ff"/><stop offset="0.45" stop-color="#2c8ef0"/><stop offset="1" stop-color="#2846c8"/></linearGradient><linearGradient id="tgb34" x1="0" y1="0" x2="0" y2="1"><stop offset="0" stop-color="#ffffff"/><stop offset="1" stop-color="#e6fafa"/></linearGradient></defs><rect x="0.5" y="0.5" width="19" height="18" fill="url(#tgb34)" stroke="#3474dc"/><rect x="0" y="0" width="20" height="3" fill="url(#tg34)"/><path d="M15 4.2C14.2 3.3 12.9 3.4 12.4 4.8L9.8 13.2C9.3 14.6 8 15.1 5.2 14.9" fill="none" stroke="#1c2444" stroke-width="1.4"/><path d="M7.3 7.6H14" stroke="#1c2444" stroke-width="1.3"/></svg></div><div class="nm sm bd">fflush</div><div class="sg sm bd">extern</div></div>
<div class="row" style="top:639px;background:#ffe1ff"><div class="ic"><svg width="20" height="19" viewBox="0 0 20 19"><defs><linearGradient id="tg35" x1="0" x2="1"><stop offset="0" stop-color="#48e8ff"/><stop offset="0.45" stop-color="#2c8ef0"/><stop offset="1" stop-color="#2846c8"/></linearGradient><linearGradient id="tgb35" x1="0" y1="0" x2="0" y2="1"><stop offset="0" stop-color="#ffffff"/><stop offset="1" stop-color="#e6fafa"/></linearGradient></defs><rect x="0.5" y="0.5" width="19" height="18" fill="url(#tgb35)" stroke="#3474dc"/><rect x="0" y="0" width="20" height="3" fill="url(#tg35)"/><path d="M15 4.2C14.2 3.3 12.9 3.4 12.4 4.8L9.8 13.2C9.3 14.6 8 15.1 5.2 14.9" fill="none" stroke="#1c2444" stroke-width="1.4"/><path d="M7.3 7.6H14" stroke="#1c2444" stroke-width="1.3"/></svg></div><div class="nm sm bd">atol</div><div class="sg sm bd">extern</div></div>
<div class="row" style="top:658px;background:#ffe1ff"><div class="ic"><svg width="20" height="19" viewBox="0 0 20 19"><defs><linearGradient id="tg36" x1="0" x2="1"><stop offset="0" stop-color="#48e8ff"/><stop offset="0.45" stop-color="#2c8ef0"/><stop offset="1" stop-color="#2846c8"/></linearGradient><linearGradient id="tgb36" x1="0" y1="0" x2="0" y2="1"><stop offset="0" stop-color="#ffffff"/><stop offset="1" stop-color="#e6fafa"/></linearGradient></defs><rect x="0.5" y="0.5" width="19" height="18" fill="url(#tgb36)" stroke="#3474dc"/><rect x="0" y="0" width="20" height="3" fill="url(#tg36)"/><path d="M15 4.2C14.2 3.3 12.9 3.4 12.4 4.8L9.8 13.2C9.3 14.6 8 15.1 5.2 14.9" fill="none" stroke="#1c2444" stroke-width="1.4"/><path d="M7.3 7.6H14" stroke="#1c2444" stroke-width="1.3"/></svg></div><div class="nm sm bd">atoi</div><div class="sg sm bd">extern</div></div>
</div>
<div class="a" style="left:406px;top:42px;width:20px;height:706px;background:#f0f0f0"></div>
<div class="a" style="left:406px;top:187px;width:19px;height:540px;background:#cdcdcd"></div>
<svg class="a" style="left:410px;top:48px" width="12" height="9"><path d="M1.3 7.4L5.5 2.2L9.7 7.4" fill="none" stroke="#555" stroke-width="1.8"/></svg>
<svg class="a" style="left:410px;top:733px" width="12" height="9"><path d="M1.3 1.6L5.5 6.8L9.7 1.6" fill="none" stroke="#555" stroke-width="1.8"/></svg>
<div class="a" style="left:0;top:748px;width:426px;height:21px;background:#f0f0f0"></div>
<div class="a" style="left:19px;top:749px;width:137px;height:19px;background:#cdcdcd"></div>
<svg class="a" style="left:3px;top:753px" width="9" height="12"><path d="M7.4 1.3L2.2 5.5L7.4 9.7" fill="none" stroke="#555" stroke-width="1.8"/></svg>
<svg class="a" style="left:390px;top:753px" width="9" height="12"><path d="M1.6 1.3L6.8 5.5L1.6 9.7" fill="none" stroke="#555" stroke-width="1.8"/></svg>
<div class="a" style="left:4px;top:775px;font-family:'Liberation Sans', sans-serif;font-size:16px;line-height:18px;color:#000">Line 26 of 43</div>
<div class="a" style="left:432px;top:16px;width:143px;height:26px;background:#f0f0f0;border:1px solid #d9d9d9;border-bottom:none"></div>
<div class="a" style="left:445px;top:19px;width:16px;height:16px"><svg width="16" height="16" viewBox="0 0 16 16"><defs><linearGradient id="dg0" x1="0" y1="0" x2="1" y2="1"><stop offset="0" stop-color="#ffffff"/><stop offset="1" stop-color="#bfe4ff"/></linearGradient></defs><rect x="0.5" y="0.5" width="10" height="12" fill="url(#dg0)" stroke="#3c90e8"/><rect x="0" y="0" width="11" height="2" fill="#3aa0f0"/><rect x="5.5" y="3.5" width="10" height="12" fill="#f4f8fc" stroke="#24508f"/><path d="M7.5 6.5h6M8.5 8.5h5M7.5 10.5h6M8.5 12.5h5" stroke="#3a5a8a"/></svg></div>
<div class="a sm" style="left:465px;top:23px;line-height:16px">IDA&#32;Vie</div>
<div class="a" style="left:522px;top:28px;width:2px;height:2px;background:#000"></div>
<div class="a" style="left:526px;top:28px;width:2px;height:2px;background:#000"></div>
<div class="a" style="left:530px;top:28px;width:2px;height:2px;background:#000"></div>
<svg class="a" style="left:543px;top:22px" width="14" height="14"><rect x="0.5" y="0.5" width="13" height="13" rx="2" fill="#c2c2c2" stroke="#a8a8a8"/><path d="M4.2 4.2L9.8 9.8M9.8 4.2L4.2 9.8" stroke="#fff" stroke-width="2"/></svg>
<div class="a" style="left:574px;top:14px;width:167px;height:28px;background:#fff;border:1px solid #d9d9d9;border-bottom:none"></div>
<div class="a" style="left:591px;top:19px;width:16px;height:16px"><svg width="16" height="16" viewBox="0 0 16 16"><defs><linearGradient id="dg1" x1="0" y1="0" x2="1" y2="1"><stop offset="0" stop-color="#ffffff"/><stop offset="1" stop-color="#bfe4ff"/></linearGradient></defs><rect x="0.5" y="0.5" width="10" height="12" fill="url(#dg1)" stroke="#3c90e8"/><rect x="0" y="0" width="11" height="2" fill="#3aa0f0"/><rect x="5.5" y="3.5" width="10" height="12" fill="#f4f8fc" stroke="#24508f"/><path d="M7.5 6.5h6M8.5 8.5h5M7.5 10.5h6M8.5 12.5h5" stroke="#3a5a8a"/></svg></div>
<div class="a sm" style="left:611px;top:23px;line-height:16px">Pseudocod</div>
<div class="a" style="left:684px;top:28px;width:2px;height:2px;background:#000"></div>
<div class="a" style="left:688px;top:28px;width:2px;height:2px;background:#000"></div>
<div class="a" style="left:692px;top:28px;width:2px;height:2px;background:#000"></div>
<svg class="a" style="left:706px;top:21px" width="14" height="14"><rect x="0.5" y="0.5" width="13" height="13" rx="2" fill="#e4704e" stroke="#d8402c"/><path d="M4.2 4.2L9.8 9.8M9.8 4.2L4.2 9.8" stroke="#fff" stroke-width="2"/></svg>
<div class="a" style="left:740px;top:16px;width:169px;height:26px;background:#f0f0f0;border:1px solid #d9d9d9;border-bottom:none"></div>
<div class="a" style="left:754px;top:20px;width:16px;height:16px"><svg width="16" height="16" viewBox="0 0 16 16"><defs><linearGradient id="sg2" x1="0" x2="1"><stop offset="0" stop-color="#48e8ff"/><stop offset="1" stop-color="#2846c8"/></linearGradient></defs><rect x="0.5" y="0.5" width="15" height="15" fill="#fff" stroke="#3474dc"/><rect x="0" y="0" width="16" height="2.5" fill="url(#sg2)"/><path d="M5 4H13V12L11.5 14H3V6Z" fill="#1838e0"/><path d="M5.5 5.5H12M4 7.6H11M4 9.8H11M4 12H11" stroke="#a8f0ff" stroke-width="1"/></svg></div>
<div class="a sm" style="left:774px;top:23px;line-height:16px">Stack&#32;of&#32;m</div>
<div class="a" style="left:855px;top:28px;width:2px;height:2px;background:#000"></div>
<div class="a" style="left:859px;top:28px;width:2px;height:2px;background:#000"></div>
<div class="a" style="left:863px;top:28px;width:2px;height:2px;background:#000"></div>
<svg class="a" style="left:876px;top:22px" width="14" height="14"><rect x="0.5" y="0.5" width="13" height="13" rx="2" fill="#c2c2c2" stroke="#a8a8a8"/><path d="M4.2 4.2L9.8 9.8M9.8 4.2L4.2 9.8" stroke="#fff" stroke-width="2"/></svg>
<div class="a" style="left:908px;top:16px;width:187px;height:26px;background:#f0f0f0;border:1px solid #d9d9d9;border-bottom:none"></div>
<div class="a" style="left:924px;top:20px;width:16px;height:16px"><svg width="16" height="16" viewBox="0 0 16 16"><defs><linearGradient id="sg3" x1="0" x2="1"><stop offset="0" stop-color="#48e8ff"/><stop offset="1" stop-color="#2846c8"/></linearGradient></defs><rect x="0.5" y="0.5" width="15" height="15" fill="#fff" stroke="#3474dc"/><rect x="0" y="0" width="16" height="2.5" fill="url(#sg3)"/><path d="M5 4H13V12L11.5 14H3V6Z" fill="#1838e0"/><path d="M5.5 5.5H12M4 7.6H11M4 9.8H11M4 12H11" stroke="#a8f0ff" stroke-width="1"/></svg></div>
<div class="a sm" style="left:944px;top:23px;line-height:16px">Stack&#32;of&#32;cre</div>
<div class="a" style="left:1041px;top:28px;width:2px;height:2px;background:#000"></div>
<div class="a" style="left:1045px;top:28px;width:2px;height:2px;background:#000"></div>
<div class="a" style="left:1049px;top:28px;width:2px;height:2px;background:#000"></div>
<svg class="a" style="left:1062px;top:22px" width="14" height="14"><rect x="0.5" y="0.5" width="13" height="13" rx="2" fill="#c2c2c2" stroke="#a8a8a8"/><path d="M4.2 4.2L9.8 9.8M9.8 4.2L4.2 9.8" stroke="#fff" stroke-width="2"/></svg>
<div class="a" style="left:1094px;top:16px;width:107px;height:26px;background:#f0f0f0;border:1px solid #d9d9d9;border-bottom:none"></div>
<div class="a" style="left:1110px;top:20px;width:16px;height:16px"><svg width="16" height="16" viewBox="0 0 16 16"><defs><linearGradient id="sg4" x1="0" x2="1"><stop offset="0" stop-color="#48e8ff"/><stop offset="1" stop-color="#2846c8"/></linearGradient></defs><rect x="0.5" y="0.5" width="15" height="15" fill="#fff" stroke="#3474dc"/><rect x="0" y="0" width="16" height="2.5" fill="url(#sg4)"/><path d="M5 4H13V12L11.5 14H3V6Z" fill="#1838e0"/><path d="M5.5 5.5H12M4 7.6H11M4 9.8H11M4 12H11" stroke="#a8f0ff" stroke-width="1"/></svg></div>
<div class="a sm" style="left:1131px;top:23px;line-height:16px">Stack&#32;of&#32;</div>
<div class="a" style="left:430px;top:41px;width:752px;height:1px;background:#c4bcb4"></div>
<div class="a" style="left:575px;top:41px;width:165px;height:1px;background:#fff"></div>
<div class="a" style="left:430px;top:42px;width:752px;height:753px;background:#fff"></div>
<div class="a" style="left:476px;top:42px;width:706px;height:1px;background:#1e7ad6"></div>
<div class="a" style="left:476px;top:42px;width:1px;height:729px;background:#1e7ad6"></div>
<div class="a" style="left:430px;top:43px;width:752px;height:728px;overflow:hidden">
<div class="a" style="left:146px;top:40px;width:63px;height:20px;background:#ffff00"></div>
<div class="ln" style="left:10px;top:2px">4</div>
<div class="code" style="left:47px;top:2px"><span class="n">&#32;&#32;signed&#32;int&#32;v5;&#32;</span><span class="b">//&#32;</span><span class="c">[rsp+Ch]&#32;[rbp-74h]</span></div>
<div class="ln" style="left:10px;top:22px">5</div>
<div class="code" style="left:47px;top:22px"><span class="n">&#32;&#32;char&#32;nptr;&#32;</span><span class="b">//&#32;</span><span class="c">[rsp+10h]&#32;[rbp-70h]</span></div>
<div class="ln" style="left:10px;top:42px">6</div>
<div class="code" style="left:47px;top:42px"><span class="n">&#32;&#32;unsigned&#32;</span><span class="y">__int64</span><span class="n">&#32;v7;&#32;</span><span class="b">//&#32;</span><span class="c">[rsp+78h]&#32;[rbp-8h]</span></div>
<div class="ln" style="left:10px;top:62px">7</div>
<div class="code" style="left:47px;top:62px"></div>
<div class="ln" style="left:10px;top:82px">8</div>
<div class="dot" style="left:7px;top:84px"></div>
<div class="code" style="left:47px;top:82px"><span class="n">&#32;&#32;</span><span class="v">v7</span><span class="n">&#32;=&#32;</span><span class="b">__readfsqword</span><span class="n">(0x28u);</span></div>
<div class="ln" style="left:10px;top:102px">9</div>
<div class="dot" style="left:7px;top:104px"></div>
<div class="code" style="left:47px;top:102px"><span class="n">&#32;&#32;</span><span class="b">alarm</span><span class="n">(0x78u);</span></div>
<div class="ln" style="left:10px;top:122px">10</div>
<div class="dot" style="left:7px;top:124px"></div>
<div class="code" style="left:47px;top:122px"><span class="n">&#32;&#32;while&#32;(&#32;</span><span class="b">fgets</span><span class="n">(&amp;</span><span class="v">nptr</span><span class="n">,&#32;10,&#32;</span><span class="b">stdin</span><span class="n">)&#32;)</span></div>
<div class="ln" style="left:10px;top:142px">11</div>
<div class="code" style="left:47px;top:142px"><span class="n">&#32;&#32;{</span></div>
<div class="ln" style="left:10px;top:162px">12</div>
<div class="dot" style="left:7px;top:164px"></div>
<div class="code" style="left:47px;top:162px"><span class="n">&#32;&#32;&#32;&#32;</span><span class="v">v3</span><span class="n">&#32;=&#32;</span><span class="b">atoi</span><span class="n">(&amp;</span><span class="v">nptr</span><span class="n">);</span></div>
<div class="ln" style="left:10px;top:182px">13</div>
<div class="dot" style="left:7px;top:184px"></div>
<div class="code" style="left:47px;top:182px"><span class="n">&#32;&#32;&#32;&#32;if&#32;(&#32;</span><span class="v">v3</span><span class="n">&#32;==&#32;2&#32;)</span></div>
<div class="ln" style="left:10px;top:202px">14</div>
<div class="code" style="left:47px;top:202px"><span class="n">&#32;&#32;&#32;&#32;{</span></div>
<div class="ln" style="left:10px;top:222px">15</div>
<div class="dot" style="left:7px;top:224px"></div>
<div class="code" style="left:47px;top:222px"><span class="n">&#32;&#32;&#32;&#32;&#32;&#32;</span><span class="v">v5</span><span class="n">&#32;=&#32;</span><span class="b">edit</span><span class="n">();</span></div>
<div class="ln" style="left:10px;top:242px">16</div>
<div class="dot" style="left:7px;top:244px"></div>
<div class="code" style="left:47px;top:242px"><span class="n">&#32;&#32;&#32;&#32;&#32;&#32;goto&#32;LABEL_14;</span></div>
<div class="ln" style="left:10px;top:262px">17</div>
<div class="code" style="left:47px;top:262px"><span class="n">&#32;&#32;&#32;&#32;}</span></div>
<div class="ln" style="left:10px;top:282px">18</div>
<div class="dot" style="left:7px;top:284px"></div>
<div class="code" style="left:47px;top:282px"><span class="n">&#32;&#32;&#32;&#32;if&#32;(&#32;</span><span class="v">v3</span><span class="n">&#32;&gt;&#32;2&#32;)</span></div>
<div class="ln" style="left:10px;top:302px">19</div>
<div class="code" style="left:47px;top:302px"><span class="n">&#32;&#32;&#32;&#32;{</span></div>
<div class="ln" style="left:10px;top:322px">20</div>
<div class="dot" style="left:7px;top:324px"></div>
<div class="code" style="left:47px;top:322px"><span class="n">&#32;&#32;&#32;&#32;&#32;&#32;if&#32;(&#32;</span><span class="v">v3</span><span class="n">&#32;==&#32;3&#32;)</span></div>
<div class="ln" style="left:10px;top:342px">21</div>
<div class="code" style="left:47px;top:342px"><span class="n">&#32;&#32;&#32;&#32;&#32;&#32;{</span></div>
<div class="ln" style="left:10px;top:362px">22</div>
<div class="dot" style="left:7px;top:364px"></div>
<div class="code" style="left:47px;top:362px"><span class="n">&#32;&#32;&#32;&#32;&#32;&#32;&#32;&#32;</span><span class="v">v5</span><span class="n">&#32;=&#32;</span><span class="b">delete</span><span class="n">();</span></div>
<div class="ln" style="left:10px;top:382px">23</div>
<div class="dot" style="left:7px;top:384px"></div>
<div class="code" style="left:47px;top:382px"><span class="n">&#32;&#32;&#32;&#32;&#32;&#32;&#32;&#32;goto&#32;LABEL_14;</span></div>
<div class="ln" style="left:10px;top:402px">24</div>
<div class="code" style="left:47px;top:402px"><span class="n">&#32;&#32;&#32;&#32;&#32;&#32;}</span></div>
<div class="ln" style="left:10px;top:422px">25</div>
<div class="dot" style="left:7px;top:424px"></div>
<div class="code" style="left:47px;top:422px"><span class="n">&#32;&#32;&#32;&#32;&#32;&#32;if&#32;(&#32;</span><span class="v">v3</span><span class="n">&#32;==&#32;4&#32;)</span></div>
<div class="ln" style="left:10px;top:442px">26</div>
<div class="code" style="left:47px;top:442px"><span class="n">&#32;&#32;&#32;&#32;&#32;&#32;{</span></div>
<div class="ln" style="left:10px;top:462px">27</div>
<div class="dot" style="left:7px;top:464px"></div>
<div class="code" style="left:47px;top:462px"><span class="n">&#32;&#32;&#32;&#32;&#32;&#32;&#32;&#32;</span><span class="v">v5</span><span class="n">&#32;=&#32;</span><span class="b">show</span><span class="n">();</span></div>
<div class="ln" style="left:10px;top:482px">28</div>
<div class="dot" style="left:7px;top:484px"></div>
<div class="code" style="left:47px;top:482px"><span class="n">&#32;&#32;&#32;&#32;&#32;&#32;&#32;&#32;goto&#32;LABEL_14;</span></div>
<div class="ln" style="left:10px;top:502px">29</div>
<div class="code" style="left:47px;top:502px"><span class="n">&#32;&#32;&#32;&#32;&#32;&#32;}</span></div>
<div class="ln" style="left:10px;top:522px">30</div>
<div class="code" style="left:47px;top:522px"><span class="n">&#32;&#32;&#32;&#32;}</span></div>
<div class="ln" style="left:10px;top:542px">31</div>
<div class="code" style="left:47px;top:542px"><span class="n">&#32;&#32;&#32;&#32;else&#32;if&#32;(&#32;</span><span class="v">v3</span><span class="n">&#32;==&#32;1&#32;)</span></div>
<div class="ln" style="left:10px;top:562px">32</div>
<div class="code" style="left:47px;top:562px"><span class="n">&#32;&#32;&#32;&#32;{</span></div>
<div class="ln" style="left:10px;top:582px">33</div>
<div class="dot" style="left:7px;top:584px"></div>
<div class="code" style="left:47px;top:582px"><span class="n">&#32;&#32;&#32;&#32;&#32;&#32;</span><span class="v">v5</span><span class="n">&#32;=&#32;</span><span class="b">create</span><span class="n">();</span></div>
<div class="ln" style="left:10px;top:602px">34</div>
<div class="dot" style="left:7px;top:604px"></div>
<div class="code" style="left:47px;top:602px"><span class="n">&#32;&#32;&#32;&#32;&#32;&#32;goto&#32;LABEL_14;</span></div>
<div class="ln" style="left:10px;top:622px">35</div>
<div class="code" style="left:47px;top:622px"><span class="n">&#32;&#32;&#32;&#32;}</span></div>
<div class="ln" style="left:10px;top:642px">36</div>
<div class="dot" style="left:7px;top:644px"></div>
<div class="code" style="left:47px;top:642px"><span class="n">&#32;&#32;&#32;&#32;</span><span class="v">v5</span><span class="n">&#32;=&#32;-1;</span></div>
<div class="ln" style="left:10px;top:662px">37</div>
<div class="code" style="left:47px;top:662px"><span class="n">LABEL_14:</span></div>
<div class="ln" style="left:10px;top:682px">38</div>
<div class="dot" style="left:7px;top:684px"></div>
<div class="code" style="left:47px;top:682px"><span class="n">&#32;&#32;&#32;&#32;if&#32;(&#32;</span><span class="v">v5</span><span class="n">&#32;)</span></div>
<div class="ln" style="left:10px;top:702px">39</div>
<div class="dot" style="left:7px;top:704px"></div>
<div class="code" style="left:47px;top:702px"><span class="n">&#32;&#32;&#32;&#32;&#32;&#32;</span><span class="b">puts</span><span class="n">(</span><span class="g">&quot;FAIL&quot;</span><span class="n">);</span></div>
</div>
<div class="a" style="left:476px;top:771px;width:706px;height:23px;background:#f0f0f0"></div>
<div class="a sm" style="left:478px;top:776px;line-height:16px">00000C58</div>
<div class="a" style="left:543px;top:773px;width:1px;height:18px;background:#d4d4d4"></div>
<div class="a sm" style="left:548px;top:776px;line-height:16px">main:4 (400C58)</div>
<div class="a" style="left:669px;top:773px;width:1px;height:18px;background:#d4d4d4"></div>
<div class="a" style="left:683px;top:773px;width:1px;height:18px;background:#d4d4d4"></div>
<div class="a" style="left:476px;top:794px;width:706px;height:1px;background:#1e7ad6"></div>
<div class="a" style="left:0;top:798px;width:1182px;height:1px;background:#b9b9b9"></div>
<div class="a" style="left:3px;top:803px;width:14px;height:16px"><svg width="14" height="16"><defs><linearGradient id="og" x1="0" x2="1"><stop offset="0" stop-color="#40f0ff"/><stop offset="0.4" stop-color="#1a60e0"/><stop offset="1" stop-color="#1028c0"/></linearGradient></defs><rect x="0.5" y="0.5" width="13" height="15" fill="#fff" stroke="#7a8a98"/><rect x="0" y="0" width="14" height="3" fill="url(#og)"/><path d="M3 6.5h8M3 8.5h8M3 10.5h8M3 12.5h8" stroke="#505a64"/></svg></div>
<div class="a sm" style="left:23px;top:805px;line-height:16px">Output window</div>
</body></html>
